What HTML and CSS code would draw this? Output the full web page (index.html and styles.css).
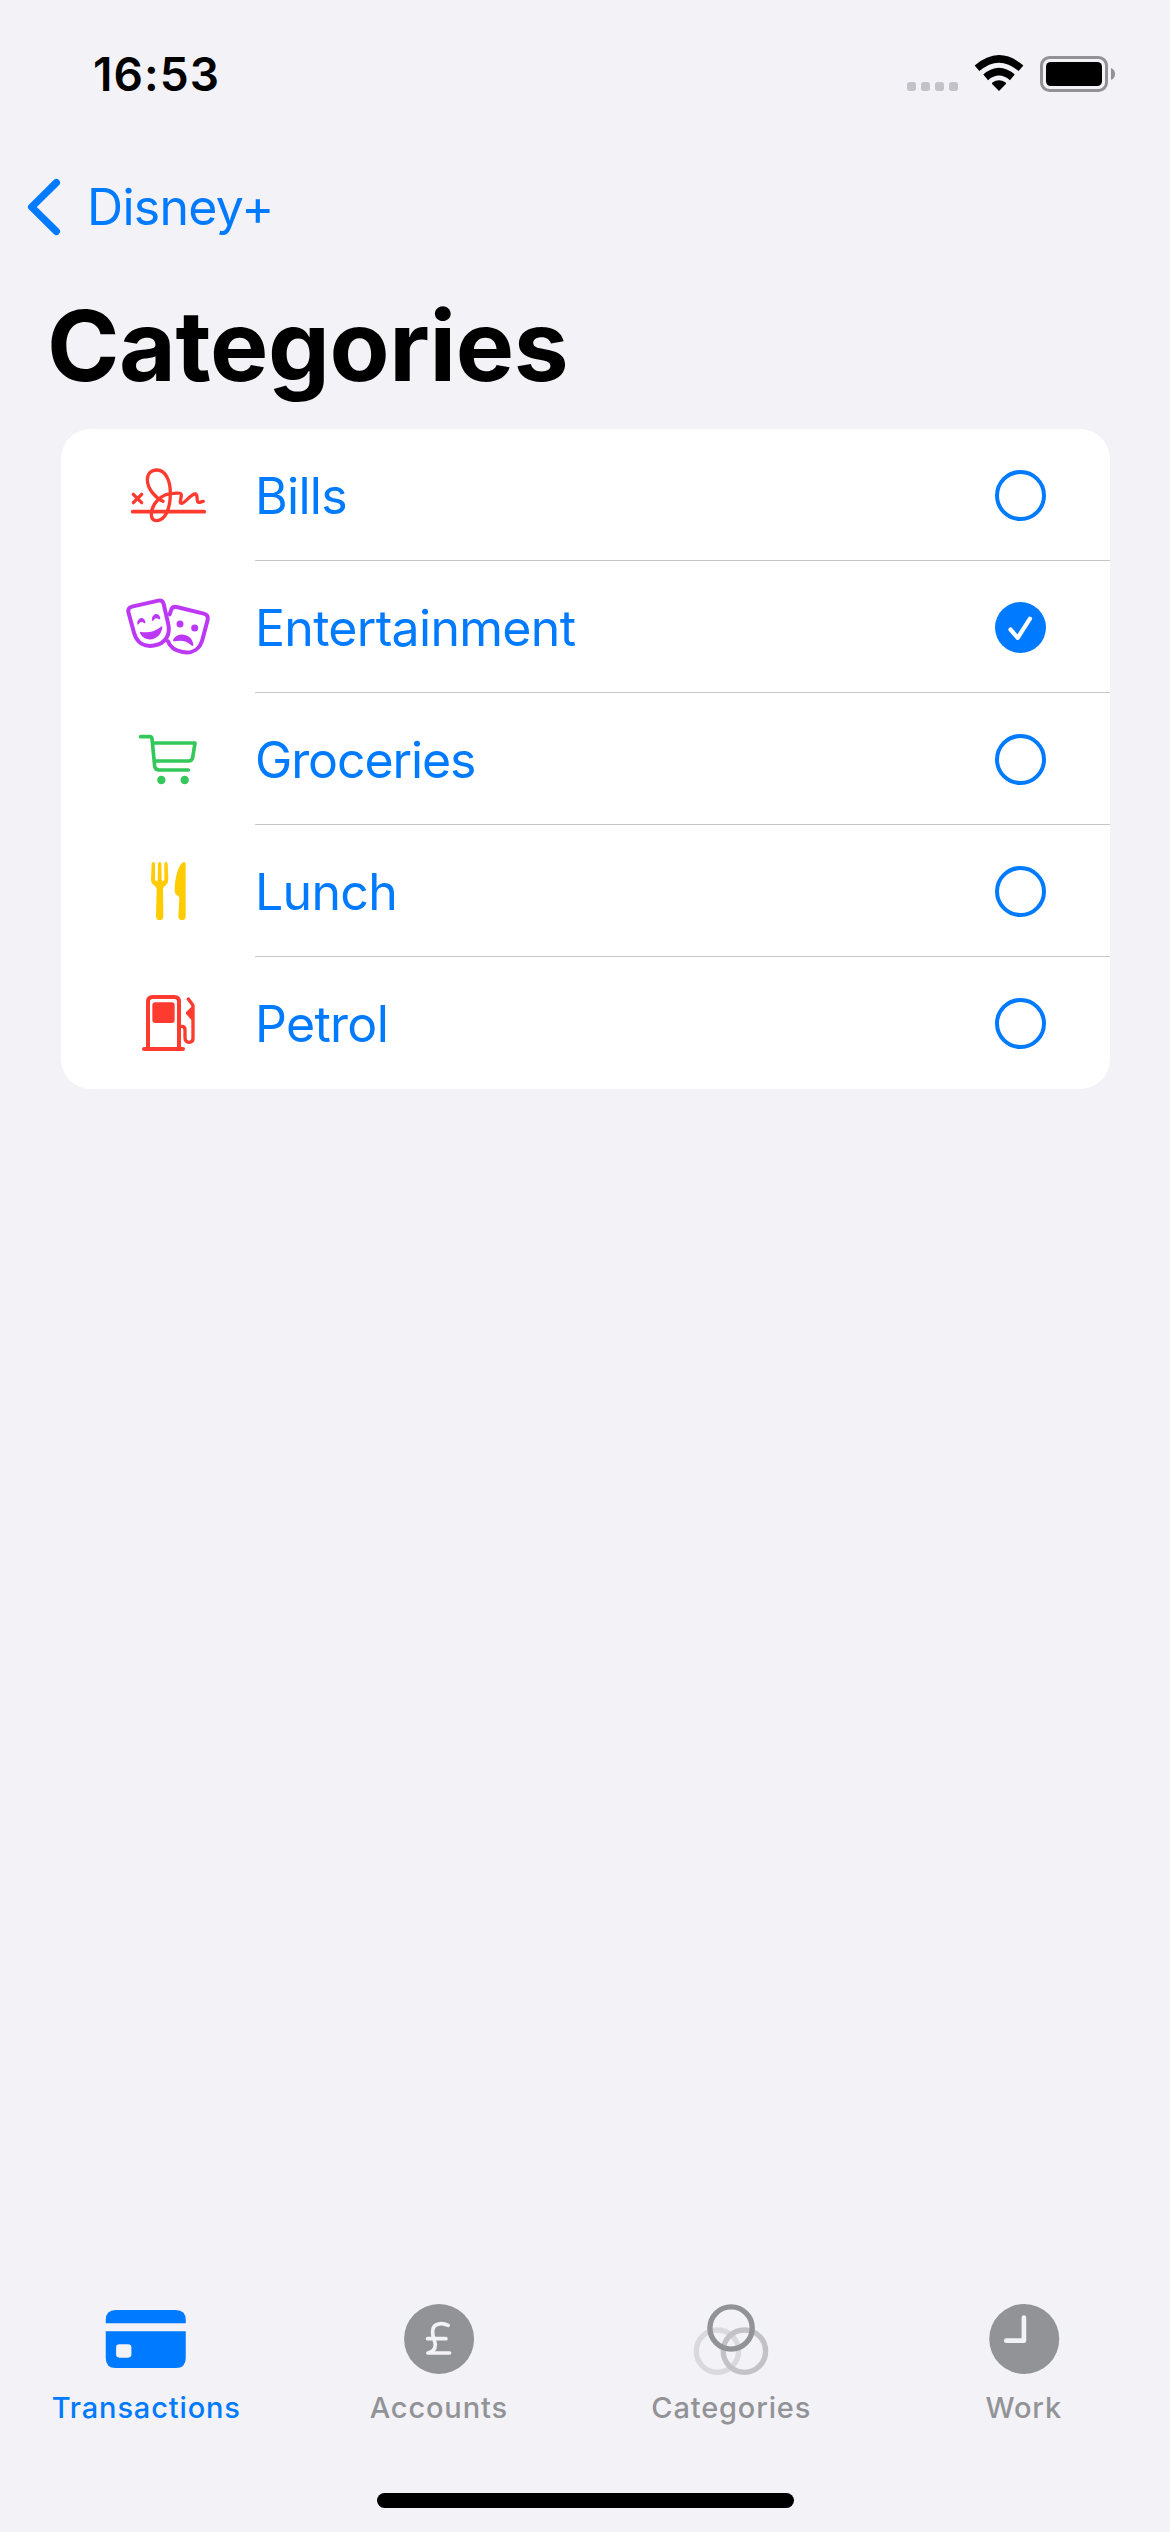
FILE: index.html
```html
<!DOCTYPE html>
<html lang="en">
<head>
<meta charset="utf-8">
<title>Categories</title>
<link rel="stylesheet" href="styles.css">
</head>
<body>
<header class="status">
  <span class="time">16:53</span>
  <svg class="status-icons" viewBox="0 0 870 270" aria-hidden="true">
    <g fill="#c3c2c8">
      <rect x="81" y="156" width="27" height="27" rx="8"/>
      <rect x="123" y="156" width="27" height="27" rx="8"/>
      <rect x="165" y="156" width="27" height="27" rx="8"/>
      <rect x="207" y="156" width="27" height="27" rx="8"/>
    </g>
    <path d="M357 183 L337 163 Q334 160 338 157 Q357 144 376 157 Q380 160 377 163 Z"/>
    <g fill="none" stroke="#000" stroke-width="22">
      <path d="M317 142 Q357 108 397 142"/>
      <path d="M291 115 Q357 58 423 115"/>
    </g>
    <rect x="484.500" y="82.500" width="195" height="99" rx="24" fill="none" stroke="#929195" stroke-width="9"/>
    <rect x="498" y="96" width="168" height="72" rx="14"/>
    <path d="M693 114 Q705 119 705 132 Q705 145 693 150 Z" fill="#929195"/>
  </svg>
</header>

<nav class="back">
  <svg class="chevron" viewBox="0 0 102 174" aria-hidden="true"><path d="M88 14 L14 87 L88 160"/></svg>
  <span>Disney+</span>
</nav>

<h1 class="title">Categories</h1>

<main class="list">
  <div class="row">
    <svg class="icon red line" viewBox="0 0 360 270" aria-hidden="true">
      <path d="M68 185 H283" stroke-width="11"/>
      <path d="M70 133 L95 158 M95 133 L70 158" stroke-width="10"/>
      <path d="M159 154 C140 146 112 118 112 89 C112 70 124 60 141 60 C167 60 181 93 181 128 C181 177 166 212 139 212 C128 212 124 204 124 193 C124 164 153 130 190 130 C210 128 214 129 214 137 C213 146 207 160 215 160 C225 160 242 132 255 132 C266 132 257 156 266 157 C272 158 274 154 280 154" stroke-width="10"/>
    </svg>
    <div class="cell"><span>Bills</span><svg class="radio" viewBox="0 0 51 51"><circle class="ring" cx="25.500" cy="25.500" r="23.500"/></svg></div>
  </div>
  <div class="row">
    <svg class="icon purple line" viewBox="0 6 360 270" aria-hidden="true">
      <path d="M66 80 L145 62 Q158 59 161 72 L175 133 C182 167 164 190 135 196 C103 203 80 188 72 158 L56 100 Q51 84 66 80 Z" stroke-width="12"/>
      <path d="M179 103 L183 91 Q187 78 200 81 L281 101 Q296 105 293 119 L278 176 C270 207 248 222 218 216 C196 212 180 201 174 184" stroke-width="12"/>
      <g class="solid">
        <path d="M82 133 C80 112 103 107 106 126 Q107 132 102 129 Q95 123 88 130 Q83 137 82 133 Z"/>
        <path d="M126 121 C124 100 147 95 151 114 Q151 120 146 117 Q138 112 132 119 Q127 125 126 121 Z"/>
        <path d="M91 155 Q126 162 153 140 Q158 137 157 143 C150 184 105 188 91 161 Q89 156 91 155 Z"/>
        <circle cx="210" cy="132" r="10.500"/>
        <circle cx="254" cy="144" r="10.500"/>
        <path d="M190 178 C203 154 247 161 250 194 Q249 201 243 195 Q224 177 193 184 Q187 184 190 178 Z"/>
      </g>
    </svg>
    <div class="cell"><span>Entertainment</span><svg class="radio" viewBox="0 0 51 51"><circle class="disc" cx="25.500" cy="25.500" r="25.500"/><path class="check" d="M15.500 27.500 L22.700 35.800 L35 16.700"/></svg></div>
  </div>
  <div class="row">
    <svg class="icon green line" viewBox="0 12 360 270" aria-hidden="true">
      <path d="M92 80 H120 Q125 80 126 86 L134 168 Q136 180 147 180 H235 M128 99 H255 L248 143 Q246 153 236 153 H134" stroke-width="11"/>
      <g class="solid"><circle cx="154" cy="210" r="12.500"/><circle cx="224" cy="210" r="12.500"/></g>
    </svg>
    <div class="cell"><span class="tight">Groceries</span><svg class="radio" viewBox="0 0 51 51"><circle class="ring" cx="25.500" cy="25.500" r="23.500"/></svg></div>
  </div>
  <div class="row">
    <svg class="icon yellow" viewBox="0 18 360 270" aria-hidden="true">
      <path d="M125 71 Q126 66 130 66 Q135 66 135 71 V119 Q135 123 139 123 Q143 123 143 119 L144 71 Q145 66 149 66 Q154 66 154 71 L155 119 Q155 123 159 123 Q163 123 163 119 V71 Q163 66 168 66 Q172 66 173 71 L175 118 Q175 130 167 136 Q159 141 159 146 L160 230 Q159 240 149 240 Q139 240 138 230 L140 146 Q140 141 132 136 Q123 130 123 118 Z"/>
      <path d="M220 66 Q227 65 227 73 V230 Q226 240 216 240 Q206 240 205 230 L208 174 Q208 169 201 166 Q193 161 194 151 C194 119 203 76 220 66 Z"/>
    </svg>
    <div class="cell"><span>Lunch</span><svg class="radio" viewBox="0 0 51 51"><circle class="ring" cx="25.500" cy="25.500" r="23.500"/></svg></div>
  </div>
  <div class="row">
    <svg class="icon red line" viewBox="0 414 360 270" aria-hidden="true">
      <path d="M102 627 H219 M114 626 V485 Q114 471 128 471 H193 Q207 471 207 485 V626" stroke-width="12"/>
      <path d="M209 559 H215 Q225 559 225 569 V592 Q225 607 237 607 Q249 607 249 595 V499 Q249 495 246 492 L235 477" stroke-width="10"/>
      <g class="solid"><rect x="127" y="487" width="67" height="62" rx="9"/><path d="M247 498 L229 515 Q226 519 229 523 L247 543 Z"/></g>
    </svg>
    <div class="cell"><span>Petrol</span><svg class="radio" viewBox="0 0 51 51"><circle class="ring" cx="25.500" cy="25.500" r="23.500"/></svg></div>
  </div>
</main>

<footer class="tabs">
  <div class="tab active">
    <svg class="tab-icon" viewBox="198.750 57 300 240" aria-hidden="true">
      <path d="M228 130 V120 Q228 90 258 90 H438 Q468 90 468 120 V130 Z"/>
      <path fill-rule="evenodd" d="M228 154 H468 V234 Q468 264 438 264 H258 Q228 264 228 234 Z M269 193 Q259 193 259 203 V223 Q259 233 269 233 H295 Q305 233 305 223 V203 Q305 193 295 193 Z"/>
    </svg>
    <span>Transactions</span>
  </div>
  <div class="tab">
    <svg class="tab-icon" viewBox="1076.250 57 300 240" aria-hidden="true">
      <circle cx="1226.500" cy="177" r="105"/>
      <path class="cut" d="M1254 136 C1232 126 1207 131 1207 155 C1207 175 1215 180 1215 195 C1215 210 1206 216 1193 219 H1258 M1192 176 H1247" stroke-width="11"/>
    </svg>
    <span>Accounts</span>
  </div>
  <div class="tab">
    <svg class="tab-icon" viewBox="153.750 57 300 240" aria-hidden="true">
      <g fill="none" stroke-width="16">
        <circle cx="263" cy="213.500" r="63.500" stroke="#dad9de"/>
        <circle cx="344" cy="213.500" r="63.500" stroke="#c2c2c7"/>
        <circle cx="304" cy="144" r="63.500" stroke="#929397"/>
      </g>
    </svg>
    <span>Categories</span>
  </div>
  <div class="tab">
    <svg class="tab-icon" viewBox="1031.250 57 300 240" aria-hidden="true">
      <circle cx="1182" cy="177" r="105"/>
      <path class="cut" d="M1181 113 V182 H1128" stroke-width="14"/>
    </svg>
    <span>Work</span>
  </div>
</footer>
<div class="home"></div>
</body>
</html>
```
FILE: styles.css
```css
* { box-sizing: border-box; }

body {
  margin: 0;
  height: 2532px;
  padding-bottom: 24px;
  display: flex;
  flex-direction: column;
  overflow: hidden;
  background: #f2f2f7;
  color: #000;
  font-family: Inter, "Liberation Sans", sans-serif;
}

svg { display: block; flex: none; }

.status {
  height: 120px;
  padding: 30px 0 0 93px;
  display: flex;
  justify-content: space-between;
}
.time {
  margin-top: 16px;
  font-size: 46px;
  font-weight: 600;
  line-height: 56px;
  letter-spacing: 1.1px;
}
.status-icons { width: 290px; height: 90px; }

.back {
  margin-top: 57px;
  padding-left: 27px;
  height: 60px;
  display: flex;
  align-items: center;
  gap: 26px;
  color: #007aff;
  font-size: 50px;
  line-height: 60px;
  letter-spacing: -0.7px;
}
.chevron { width: 34px; height: 58px; }
.chevron path {
  fill: none;
  stroke: #007aff;
  stroke-width: 22;
  stroke-linecap: round;
  stroke-linejoin: round;
}

.title {
  margin: 49px 0 24px 47px;
  font-size: 98px;
  font-weight: 700;
  line-height: 119px;
  letter-spacing: -0.4px;
}

.list {
  margin: 0 60px 0 61px;
  width: 1049px;
  border-radius: 30px;
  background: #fff;
  overflow: hidden;
}
.row {
  height: 132px;
  padding-left: 49px;
  display: flex;
  align-items: center;
  gap: 25px;
}
.icon { width: 120px; height: 90px; fill: currentColor; }
.line {
  fill: none;
  stroke: currentColor;
  stroke-linecap: round;
  stroke-linejoin: round;
}
.solid { fill: currentColor; stroke: none; }
.red { color: #ff3b30; }
.purple { color: #bd38f5; }
.green { color: #34c759; }
.yellow { color: #ffcc00; }

.cell {
  flex: 1;
  height: 132px;
  padding: 3px 64px 0 0;
  display: flex;
  align-items: center;
  justify-content: space-between;
  border-bottom: 1px solid #c6c6c8;
  color: #007aff;
  font-size: 50px;
  line-height: 60px;
  letter-spacing: -0.7px;
}
.tight { letter-spacing: -1.1px; }
.row:last-child .cell { border-bottom-color: transparent; }
.radio { width: 51px; height: 51px; margin-bottom: 1px; }
.ring { fill: none; stroke: #007aff; stroke-width: 4; }
.disc { fill: #007aff; }
.check {
  fill: none;
  stroke: #fff;
  stroke-width: 4.2;
  stroke-linecap: round;
  stroke-linejoin: round;
}

.tabs {
  margin-top: auto;
  display: grid;
  grid-template-columns: repeat(4, 1fr);
}
.tab {
  display: flex;
  flex-direction: column;
  align-items: center;
  gap: 11px;
  color: #929397;
  font-size: 29px;
  font-weight: 500;
  line-height: 35px;
  letter-spacing: 0.85px;
}
.active { color: #007aff; }
.tab-icon { width: 100px; height: 80px; fill: currentColor; }
.tab-icon .cut {
  fill: none;
  stroke: #f2f2f7;
  stroke-linecap: round;
  stroke-linejoin: round;
}

.home {
  margin: 68px 0 0 377px;
  width: 417px;
  height: 15px;
  border-radius: 8px;
  background: #000;
}
```
